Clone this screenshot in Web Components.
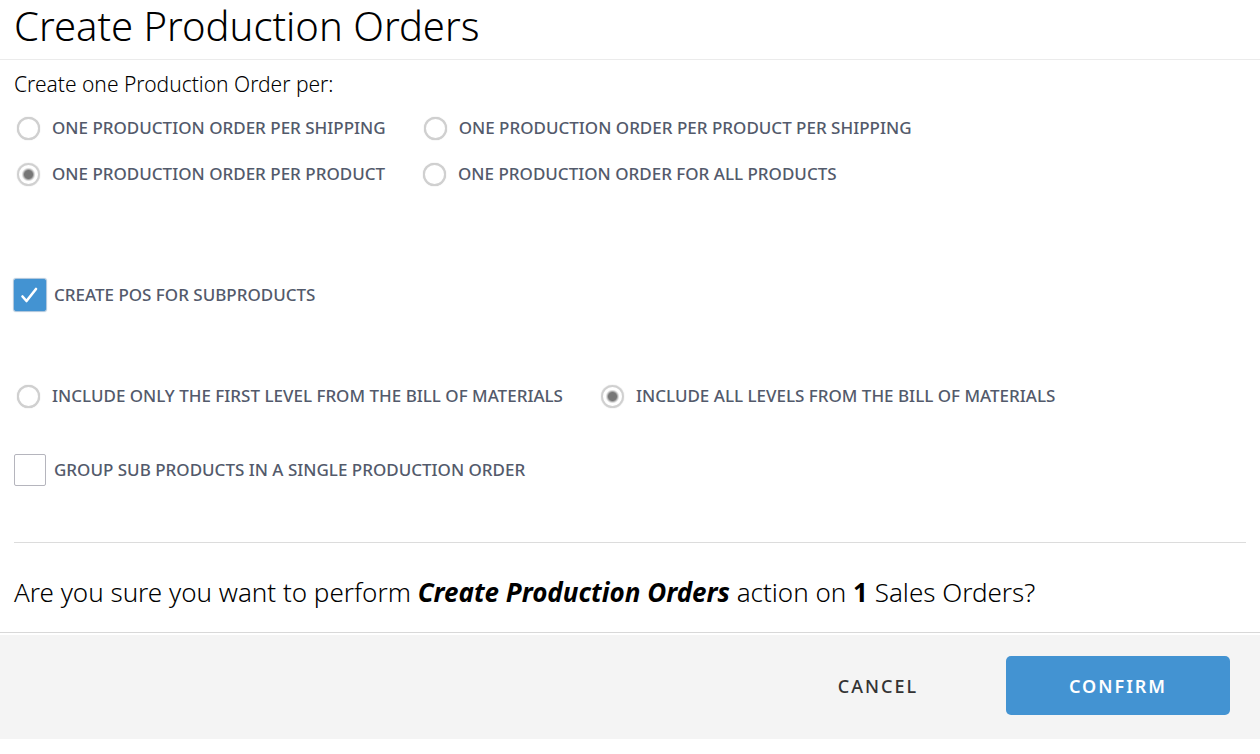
<!DOCTYPE html>
<html lang="en">
<head>
<meta charset="utf-8">
<title>Create Production Orders</title>
<style>
body { margin: 0; background: #fff; color: #000; font-family: "Noto Sans", "Open Sans", sans-serif; }
.orders { margin-bottom: 47px; }
.subproducts { margin-bottom: 27px; }
</style>
</head>
<body>
<action-dialog>
  <span slot="title">Create Production Orders</span>
  <choice-group class="orders" legend="Create one Production Order per:">
    <choice-option>ONE PRODUCTION ORDER PER SHIPPING</choice-option>
    <choice-option>ONE PRODUCTION ORDER PER PRODUCT PER SHIPPING</choice-option>
    <choice-option checked>ONE PRODUCTION ORDER PER PRODUCT</choice-option>
    <choice-option>ONE PRODUCTION ORDER FOR ALL PRODUCTS</choice-option>
  </choice-group>
  <check-option class="subproducts" checked>CREATE POS FOR SUBPRODUCTS</check-option>
  <choice-group>
    <choice-option>INCLUDE ONLY THE FIRST LEVEL FROM THE BILL OF MATERIALS</choice-option>
    <choice-option checked>INCLUDE ALL LEVELS FROM THE BILL OF MATERIALS</choice-option>
  </choice-group>
  <check-option>GROUP SUB PRODUCTS IN A SINGLE PRODUCTION ORDER</check-option>
  <confirm-question slot="question">Are you sure you want to perform <b><i>Create Production Orders</i></b> action on <b>1</b> Sales Orders?</confirm-question>
  <action-button slot="actions">CANCEL</action-button>
  <action-button slot="actions" primary>CONFIRM</action-button>
</action-dialog>

<template id="dialog">
  <style>
    :host { display: block; }
    header { padding: 0 14px 7px; border-bottom: 1px solid #ebebeb; }
    h1 { margin: 0; font-size: 40px; line-height: 52px; font-weight: 300; }
    main { display: flex; flex-direction: column; gap: 42px; padding: 8px 14px 56px; }
    .question { margin: 0 14px; padding: 32px 0 22px; border-top: 1px solid #dcdcdc; }
    footer { display: flex; justify-content: flex-end; align-items: center; gap: 26px; padding: 23px 30px 24px; border-top: 1px solid #d8d8d8; background: #f4f4f4; box-shadow: inset 0 2px #fff; }
  </style>
  <header><h1><slot name="title"></slot></h1></header>
  <main><slot></slot></main>
  <div class="question"><slot name="question"></slot></div>
  <footer><slot name="actions"></slot></footer>
</template>

<template id="group">
  <style>
    :host { display: block; }
    fieldset { min-width: 0; margin: 0; padding: 0; border: 0; }
    legend { padding: 0; margin-bottom: 12px; font-size: 21px; line-height: 32px; font-weight: 300; }
    legend[hidden] { display: none; }
    .options { display: flex; flex-wrap: wrap; gap: 14px 32px; }
  </style>
  <fieldset><legend></legend><div class="options"><slot></slot></div></fieldset>
</template>

<template id="choice">
  <style>
    :host { display: block; }
    label { display: flex; align-items: center; gap: 12px; padding: 3px 3px 3px; color: #535a6b; font-size: 17px; line-height: 26px; font-weight: 500; }
    input { appearance: none; flex: none; box-sizing: border-box; width: 23px; height: 23px; margin: 0; border: 2px solid #d0d0d0; border-radius: 50%; background: #fff; box-shadow: 0 0 1px #bbb; }
    input:checked { background: radial-gradient(circle, #777 4px, #ddd 6px, #fff 7px); }
  </style>
  <label><input type="radio"><span><slot></slot></span></label>
</template>

<template id="check">
  <style>
    :host { display: block; }
    label { display: flex; align-items: center; gap: 8px; color: #535a6b; font-size: 17px; line-height: 26px; font-weight: 500; }
    .box { display: grid; flex: none; }
    input, svg { grid-area: 1 / 1; width: 32px; height: 32px; }
    input { appearance: none; box-sizing: border-box; margin: 0; border: 1px solid #b5b5bd; border-radius: 2px; background: #fff; }
    input:checked { border-color: #4393d2; background: #4393d2; box-shadow: 0 0 1px 1px #a9c3da; }
    svg { fill: none; stroke: #fff; stroke-width: 2.6; stroke-linecap: round; stroke-linejoin: round; pointer-events: none; visibility: hidden; }
    input:checked + svg { visibility: visible; }
  </style>
  <label><span class="box"><input type="checkbox"><svg viewBox="0 0 32 32"><path d="M8.5 17.5L12.5 22L22 10"/></svg></span><span><slot></slot></span></label>
</template>

<template id="question">
  <style>
    :host { display: block; }
    p { margin: 0; font-size: 26px; line-height: 35px; font-weight: 300; }
    ::slotted(b) { font-weight: 700; }
  </style>
  <p><slot></slot></p>
</template>

<template id="button">
  <style>
    :host { display: block; }
    button { display: block; min-width: 204px; height: 59px; padding: 0 60px; border: 0; border-radius: 5px; background: transparent; color: #333; font: 500 18px/24px "Noto Sans", "Open Sans", sans-serif; letter-spacing: 2px; }
    :host([primary]) button { min-width: 224px; background: #4393d2; color: #fff; font-weight: 600; }
  </style>
  <button type="button"><slot></slot></button>
</template>

<script>
class TemplateElement extends HTMLElement {
  constructor() {
    super();
    this.attachShadow({ mode: "open" })
      .append(document.getElementById(this.constructor.template).content.cloneNode(true));
  }
}

class ActionDialog extends TemplateElement { static template = "dialog"; }
class ConfirmQuestion extends TemplateElement { static template = "question"; }
class ActionButton extends TemplateElement { static template = "button"; }

class ChoiceOption extends TemplateElement {
  static template = "choice";
  get input() { return this.shadowRoot.querySelector("input"); }
  connectedCallback() {
    this.input.checked = this.hasAttribute("checked");
    this.input.onchange = () => this.dispatchEvent(new Event("choose", { bubbles: true }));
  }
}

class CheckOption extends TemplateElement {
  static template = "check";
  connectedCallback() {
    this.shadowRoot.querySelector("input").checked = this.hasAttribute("checked");
  }
}

// Radios live in separate shadow roots, so the group keeps them exclusive.
class ChoiceGroup extends TemplateElement {
  static template = "group";
  connectedCallback() {
    const legend = this.shadowRoot.querySelector("legend");
    legend.textContent = this.getAttribute("legend") || "";
    legend.hidden = !legend.textContent;
    this.addEventListener("choose", (event) => {
      for (const option of this.querySelectorAll("choice-option")) {
        option.input.checked = option === event.target;
      }
    });
  }
}

customElements.define("action-dialog", ActionDialog);
customElements.define("confirm-question", ConfirmQuestion);
customElements.define("action-button", ActionButton);
customElements.define("choice-option", ChoiceOption);
customElements.define("check-option", CheckOption);
customElements.define("choice-group", ChoiceGroup);
</script>
</body>
</html>
